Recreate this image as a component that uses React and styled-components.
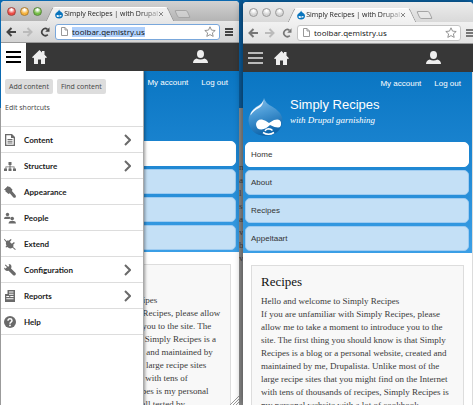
import React from "react";
import styled, { createGlobalStyle, css } from "styled-components";

const sans = '"Liberation Sans", Arial, sans-serif';
const serif = '"Liberation Serif", Georgia, serif';
const chromeFont = '"Open Sans", "Lucida Grande", sans-serif';
const adminFont = '"Open Sans", "Source Sans Pro", sans-serif';

const GlobalStyle = createGlobalStyle`
  * { box-sizing: border-box; }
  body { margin: 0; font-family: ${sans}; }
  button, input { font: inherit; color: inherit; margin: 0; padding: 0; border: 0; background: none; }
  a { color: inherit; text-decoration: none; }
  h1, h2, p, ul { margin: 0; padding: 0; }
  ul { list-style: none; }
  svg { display: block; }
`;

const Desktop = styled.main`
  display: flex;
  height: 100vh;
  overflow: hidden;
  padding-left: 1px;
  background: linear-gradient(#0b69b0 0 108px, #9b9b9b 108px);
`;

const Backdrop = styled.div`
  flex: none;
  width: 4px;
  overflow: hidden;
  padding-top: 161px;
  font: 9px/13px ${serif};
  color: #444;
  background: linear-gradient(#0b5c9b 0 108px, #8d8d8d 108px);
`;

const Window = styled.section`
  position: relative;
  display: flex;
  flex-direction: column;
  min-width: 0;
  flex: ${(p) => (p.$active ? "238 1 0" : "230 1 0")};
  margin-top: ${(p) => (p.$active ? 1 : 2)}px;
  border-radius: 4px 4px 0 0;
  overflow: hidden;
  background: #fff;
  ${(p) => !p.$active && css`z-index: 1; box-shadow: 0 0 8px rgba(0, 0, 0, 0.55);`}
`;

const TitleBar = styled.header`
  display: flex;
  flex: none;
  align-items: flex-end;
  height: 20px;
  padding-left: 6px;
  background: ${(p) => (p.$active ? "linear-gradient(#d2d2d2, #b4b4b4)" : "linear-gradient(#ececec, #d9d9d9)")};
`;

const Lights = styled.div`
  display: flex;
  gap: 4px;
  margin-bottom: 5px;
`;

const Light = styled.button`
  width: 9px;
  height: 9px;
  border-radius: 50%;
  border: 1px solid ${(p) => p.$edge};
  background: radial-gradient(circle at 50% 25%, #fff 0 10%, ${(p) => p.$color} 60%);
`;

const Tab = styled.div`
  position: relative;
  z-index: 0;
  display: flex;
  align-items: center;
  height: 14px;
  width: 122px;
  margin-left: 7px;
  padding: 0 7px 0 6px;
  font: 7px/14px ${chromeFont};
  color: #222;
  &::before, &::after {
    content: "";
    position: absolute;
    z-index: -1;
    inset: 0 30px 0 0;
    background: ${(p) => (p.$active ? "linear-gradient(#f1f1f1, #e8e8e8)" : "linear-gradient(#f8f8f8, #f1f1f1)")};
    border-top: 1px solid #fff;
    border-left: 1px solid #999;
    border-radius: 3px 0 0 0;
    transform: skewX(-25deg);
  }
  &::after {
    inset: 0 0 0 30px;
    border-left: 0;
    border-right: 1px solid #999;
    border-radius: 0 3px 0 0;
    transform: skewX(25deg);
  }
`;

const TabTitle = styled.span`
  flex: 1;
  margin-left: 1px;
  white-space: nowrap;
  mask-image: linear-gradient(90deg, #000 80%, rgba(0, 0, 0, 0.3));
`;

const CloseTab = styled.button`
  color: #888;
`;

const NewTab = styled.button`
  width: 13px;
  height: 8px;
  margin: 0 0 3px 5px;
  border: 1px solid #a5a5a5;
  border-radius: 2px;
  background: rgba(255, 255, 255, 0.25);
  transform: skewX(25deg);
`;

const ToolBar = styled.div`
  display: flex;
  flex: none;
  align-items: center;
  height: 22px;
  padding: 0 ${(p) => (p.$active ? 5 : 0)}px 0 5px;
  color: ${(p) => (p.$active ? "#444" : "#777")};
  border-bottom: 1px solid #999;
  background: ${(p) => (p.$active ? "linear-gradient(#e8e8e8, #d3d3d3)" : "linear-gradient(#f1f1f1, #e3e3e3)")};
`;

const ToolButton = styled.button`
  flex: none;
  width: ${(p) => p.$w || 17}px;
  overflow: hidden;
  ${(p) => p.$muted && css`color: #bbb;`}
`;

const AddressBar = styled.label`
  display: flex;
  flex: 1;
  align-items: center;
  min-width: 0;
  height: 16px;
  margin: 0 5px 0 -2px;
  padding: 0 3px 0 5px;
  border: 1px solid ${(p) => (p.$active ? "#79a7db" : "#c4c4c4")};
  border-radius: 3px;
  background: #fff;
`;

const AddressInput = styled.input`
  field-sizing: content;
  min-width: 0;
  height: 10px;
  margin: 0 auto 0 4px;
  font: 8px/10px ${chromeFont};
  color: #111;
  background: ${(p) => (p.$active ? "#b0d0fb" : "none")};
`;

const AdminBar = styled.nav`
  display: flex;
  flex: none;
  height: 28px;
  align-items: center;
  background: #373737;
  padding-right: ${(p) => (p.$active ? 31 : 32)}px;
`;

const MenuTab = styled.button`
  display: flex;
  width: 25px;
  height: 28px;
  align-items: center;
  justify-content: center;
  color: ${(p) => (p.$active ? "#000" : "#bbb")};
  background: ${(p) => (p.$active ? "#fff" : "none")};
`;

const IconButton = styled.button`
  color: #eee;
  margin-left: ${(p) => (p.$push ? "auto" : "6px")};
`;

const Page = styled.div`
  position: relative;
  flex: 1;
  min-height: 0;
  overflow: hidden;
  border-right: ${(p) => (p.$active ? 0 : 1)}px solid #dcdcdc;
`;

const SiteHeader = styled.header`
  padding: 7px 3px 2px 2px;
  color: #fff;
  background: linear-gradient(#0a76c3, #1b84d0 45%, #3b9fe6);
`;

const AccountLinks = styled.nav`
  display: flex;
  justify-content: flex-end;
  gap: 13px;
  padding-right: 8px;
  font-size: 8px;
  line-height: 10px;
`;

const Brand = styled.div`
  display: flex;
  gap: 7px;
  height: 41px;
  margin: 8px 0 4px 3px;
`;

const SiteName = styled.h1`
  font: 13px/16px ${sans};
  white-space: nowrap;
`;

const Slogan = styled.p`
  font: italic 9px/15px ${serif};
  white-space: nowrap;
`;

const SiteNav = styled.ul`
  display: flex;
  flex-direction: column;
  gap: 3px;
`;

const NavLink = styled.a`
  display: block;
  height: 25px;
  padding: 0 5px;
  border: 1px solid ${(p) => (p.$current ? "#fff" : "#9dcbf1")};
  border-radius: 5px;
  font-size: 8px;
  line-height: 23px;
  color: #333;
  background: ${(p) => (p.$current ? "#fff" : "#c4e0f6")};
`;

const Article = styled.article`
  margin: 12px 8px 0;
  padding: 8px 9px;
  height: 100%;
  border: 1px solid #ddd;
  background: #f8f8f8;
  color: #3b3b3b;
  font: 9px/13px ${serif};
  white-space: pre;
`;

const ArticleTitle = styled.h2`
  margin-bottom: 5px;
  font: 13px/16px ${serif};
  color: #111;
`;

const Tray = styled.aside`
  position: absolute;
  inset: 0 auto 0 0;
  width: 60%;
  background: #fff;
  border-right: 1px solid #aaa;
  box-shadow: 1px 0 3px rgba(0, 0, 0, 0.4);
  font-family: ${adminFont};
  color: #444;
`;

const Shortcuts = styled.div`
  display: flex;
  flex-wrap: wrap;
  gap: 4px;
  height: 55px;
  padding: 8px 4px 0;
  line-height: 15px;
  align-content: flex-start;
`;

const Shortcut = styled.button`
  height: 15px;
  padding: 0 4px;
  border-radius: 2px;
  background: #ddd;
  font-size: 7px;
  line-height: 15px;
`;

const EditLink = styled.a`
  flex-basis: 100%;
  margin-top: 2px;
  font-size: 7px;
`;

const TrayRow = styled.li`
  display: flex;
  align-items: center;
  height: 26px;
  padding: 0 12px 0 3px;
  border-top: 1px solid #ddd;
  color: #6a6a6a;
  &:last-child { height: 27px; border-bottom: 1px solid #ddd; }
`;

const TrayLink = styled.a`
  flex: 1;
  margin-left: 8px;
  font: 700 8px/12px Lato, ${adminFont};
  color: #222;
`;

const Grip = styled.div`
  position: absolute;
  right: 0;
  bottom: 0;
  color: #999;
`;

const Stroke = ({ d, w = 12, h = 12, sw = 2, vb = "0 0 12 12" }) => (
  <svg width={w} height={h} viewBox={vb} fill="none" stroke="currentColor" strokeWidth={sw} aria-hidden="true">
    <path d={d} />
  </svg>
);

const trayIcons = {
  Content: (
    <path fillRule="evenodd" d="M1 0h7l3 3v9H1zM2.300 1.300v9.400h7.400V4H7V1.300zM3.500 5h5v1h-5zM3.500 6.800h5v1h-5zM3.500 8.600h5v1h-5z" />
  ),
  Structure: (
    <path d="M4.500 2h3v3h-1v1.500H10.500V8.500H12v2.500H9V8.500h.7V7.300H6.500v1.200h1V11h-3V8.500h1V7.300H2.300v1.200H3V11H0V8.500h1.500V6.500h4V5h-1z" />
  ),
  Appearance: (
    <path d="M0 3.800 3.800 0l1.200 1.100.8-.4L8.500 3.800l-.6 1.300 3.500 4q1 1.300.1 2.300-1.100.9-2.300-.2L5.800 7.300 4.500 7.900 1.300 5.300l.5-.7z" />
  ),
  People: (
    <>
      <circle cx="3.500" cy="2.500" r="1.700" />
      <path d="M0 7q0-2.200 2-2.300h3Q6.300 4.800 6.500 6L5.500 7zM4.500 11.500q0-2.300 2-2.500h3.500q2 .2 2 2.500z" />
      <circle cx="8.200" cy="6.600" r="1.800" />
    </>
  ),
  Extend: (
    <path d="M.4.800 2.600 3 4 2.200l.6.600L6.800.900l.8.900L5.900 3.900 7.800 5.800 10 4.100l.8.900L9 7.100l.6.700-.5 1.100 2.700 2.300-.7.700L8.600 9.700Q5.500 11.500 3.500 9L2 9.500l-.5-.8 1-1Q1.500 5.500 2 4L0 1.500z" />
  ),
  Configuration: (
    <path d="M1.600.6 4 2.700l1-.5.2-1.300L4.500.1q3-.2 3 3L7 4.500l4.400 4.300q.9 1.200 0 2.200t-2.200.2L4.600 6.700 3 7Q.2 6.600 0 3.600l1.300.9 1.100-.4.4-1L.8 1.300z" />
  ),
  Reports: (
    <path fillRule="evenodd" d="M3.500 0H11v12H1V4h2.500zM5 1.500v1h4.500v-1zM5 3.700v1h4.500v-1zM2.300 6v1h2.900V6zM6.300 6v1h3.200V6zM2.300 8.200v1h7.200v-1z" />
  ),
  Help: (
    <>
      <circle cx="6" cy="6" r="6" />
      <path d="M4 4.700q.1-1.900 2-1.900t2 1.700q0 .9-1 1.600T6 7.700" fill="none" stroke="#fff" strokeWidth="1.500" />
      <circle cx="6" cy="9.400" r=".9" fill="#fff" />
    </>
  ),
};

const Drop = () => (
  <svg width="9" height="10" viewBox="0 0 9 10" aria-hidden="true">
    <path d="M4.500 0q.5 1.700 2.400 2.900Q9 4.200 8.800 6.300 8.300 9.800 4.500 10 .5 9.800.2 6.300 0 4.300 2 3 4.200 1.700 4.500 0z" fill="#0874bd" />
    <path d="M1.500 7q.8-1.600 2.100-.7l1.200.6 1.500-.8q1.200 0 1 1.200-.7.900-2.300.1Q2.500 9.400 1.500 7z" fill="#fff" />
  </svg>
);

const Logo = () => (
  <svg width="35" height="40" viewBox="0 0 35 40" aria-hidden="true">
    <defs>
      <linearGradient id="drop" x1="0" y1="0" x2=".3" y2="1">
        <stop offset="0" stopColor="#8fc3e9" />
        <stop offset=".45" stopColor="#4b9ad5" />
        <stop offset="1" stopColor="#0f66ac" />
      </linearGradient>
    </defs>
    <path d="M16 1q1 5 8 8.500Q34.500 15 34.500 24 33 38 17.500 39 2 38 .5 24 .5 15 8.500 9.500 15.500 6 16 1z" fill="url(#drop)" />
    <path d="M15.500 3q-1 4-7.500 7.500Q2 15 2.500 18.500q3.500-5.500 8.500-7.500 4-2 4.500-8z" fill="#f2f9ff" />
    <path d="M8 27q1-5 6-4.500 3.500.5 7 3.500l5-3q6-2 7 2.500.5 5-3 5-3 0-8-2.500-4 4-8.500 4.500Q8 32.500 8 27z" fill="#fff" />
    <path d="M17 34q1-2 3.500-2.300 2.500 0 4 1.800M15 35.500q5.500 3.500 11 0" fill="none" stroke="#fff" strokeWidth="1.500" />
  </svg>
);

const navItems = ["Home", "About", "Recipes", "Appeltaart"];
const trayItems = [
  ["Content", true],
  ["Structure", true],
  ["Appearance", false],
  ["People", false],
  ["Extend", false],
  ["Configuration", true],
  ["Reports", true],
  ["Help", false],
];

const wideCopy = `Hello and welcome to Simply Recipes
If you are unfamiliar with Simply Recipes, please allow
me to take a moment to introduce you to the site. The
first thing you should know is that Simply Recipes is a
blog or a personal website, created and maintained by
me, Drupalista. Unlike most of the large recipe sites
that you might find on the Internet with tens of
thousands of recipes, Simply Recipes is my personal
cookbook of hundreds of recipes, all tested by`;

const narrowCopy = `Hello and welcome to Simply Recipes
If you are unfamiliar with Simply Recipes, please
allow me to take a moment to introduce you to the
site. The first thing you should know is that Simply
Recipes is a blog or a personal website, created and
maintained by me, Drupalista. Unlike most of the
large recipe sites that you might find on the Internet
with tens of thousands of recipes, Simply Recipes is
my personal website with a lot of cookbook`;

function Browser({ active, copy, children }) {
  const lights = active
    ? [["Close", "#ee4b45", "#a3433d"], ["Minimize", "#f6b33c", "#ac7c32"], ["Zoom", "#75bd45", "#55863a"]]
    : [["Close", "#d4d4d4", "#999"], ["Minimize", "#d4d4d4", "#999"], ["Zoom", "#d4d4d4", "#999"]];
  return (
    <Window $active={active}>
      <TitleBar $active={active}>
        <Lights>
          {lights.map(([name, color, edge]) => (
            <Light key={name} aria-label={name} $color={color} $edge={edge} />
          ))}
        </Lights>
        <Tab $active={active}>
          <Drop />
          <TabTitle>Simply Recipes | with Drupal</TabTitle>
          <CloseTab aria-label="Close tab">
            <Stroke d="M1 1l4 4M5 1L1 5" w={6} h={6} vb="0 0 6 6" sw={1} />
          </CloseTab>
        </Tab>
        <NewTab aria-label="New tab" />
      </TitleBar>
      <ToolBar $active={active}>
        <ToolButton aria-label="Back">
          <Stroke d="M10 5H2M5.500 1L1.500 5l4 4" w={10} h={10} vb="0 0 10 10" />
        </ToolButton>
        <ToolButton aria-label="Forward" $muted>
          <Stroke d="M0 5h8M4.500 1l4 4-4 4" w={10} h={10} vb="0 0 10 10" />
        </ToolButton>
        <ToolButton aria-label="Reload">
          <svg width="10" height="10" viewBox="0 0 10 10">
            <path d="M7.800 7.600A3.500 3.500 0 1 1 7.500 2.300" fill="none" stroke="currentColor" strokeWidth="1.700" />
            <path d="M9.500.3v4.400H5.200z" fill="currentColor" />
          </svg>
        </ToolButton>
        <AddressBar $active={active}>
          <svg width="7" height="9" viewBox="0 0 7 9" fill="none" stroke="#999">
            <path d="M.5.5h3.500l2.500 2.500v5.500h-6zM4 .5V3h2.500" />
          </svg>
          <AddressInput $active={active} aria-label="Address" defaultValue="toolbar.qemistry.us" />
          <svg width="12" height="11" viewBox="0 0 12 11" fill="#fff" stroke="#888" strokeWidth=".9">
            <path d="M6 .8l1.500 3.300 3.700.4-2.800 2.400.8 3.500L6 8.600l-3.200 1.800.8-3.500L.8 4.500l3.700-.4z" />
          </svg>
        </AddressBar>
        <ToolButton aria-label="Browser menu" $w={active ? 9 : 7}>
          <Stroke d="M0 1h8M0 4h8M0 7h8" w={8} h={8} vb="0 0 8 8" sw={2} />
        </ToolButton>
      </ToolBar>
      <AdminBar $active={active}>
        <MenuTab $active={active} aria-label="Menu">
          <Stroke d="M0 1h15M0 6h15M0 11h15" w={15} h={12} vb="0 0 15 12" />
        </MenuTab>
        <IconButton aria-label="Home">
          <svg width="15" height="14" viewBox="0 0 15 14" fill="currentColor">
            <path d="M7.500 0L10 2.400V1h2.500v3.700L15 7.300 13.800 8.300 13 7.600V14H9V9.500H6V14H2V7.600l-.8.700L0 7.300z" />
          </svg>
        </IconButton>
        <IconButton $push aria-label="User">
          <svg width="15" height="14" viewBox="0 0 15 14" fill="currentColor">
            <ellipse cx="7.500" cy="4" rx="3.500" ry="4" />
            <path d="M0 13q0-3.500 3.500-4.500 4 2 8 0Q15 9.500 15 13z" />
          </svg>
        </IconButton>
      </AdminBar>
      <Page $active={active}>
        <SiteHeader>
          <AccountLinks>
            <a href="#account">My account</a>
            <a href="#logout">Log out</a>
          </AccountLinks>
          <Brand>
            {!active && (
              <>
                <Logo />
                <div>
                  <SiteName>Simply Recipes</SiteName>
                  <Slogan>with Drupal garnishing</Slogan>
                </div>
              </>
            )}
          </Brand>
          <SiteNav>
            {navItems.map((item, i) => (
              <li key={item}>
                <NavLink href={"#" + item} $current={i === 0} aria-label={item}>
                  {active ? null : item}
                </NavLink>
              </li>
            ))}
          </SiteNav>
        </SiteHeader>
        <Article>
          <ArticleTitle>{active ? "\u00a0" : "Recipes"}</ArticleTitle>
          <p>{copy}</p>
        </Article>
        {children}
      </Page>
    </Window>
  );
}

export default function App() {
  return (
    <Desktop>
      <GlobalStyle />
      <Browser active copy={wideCopy}>
        <Tray aria-label="Administration menu">
          <Shortcuts>
            <Shortcut>Add content</Shortcut>
            <Shortcut>Find content</Shortcut>
            <EditLink href="#shortcuts">Edit shortcuts</EditLink>
          </Shortcuts>
          <ul>
            {trayItems.map(([name, nested]) => (
              <TrayRow key={name}>
                <svg width="12" height="12" viewBox="0 0 12 12" fill="currentColor" aria-hidden="true">
                  {trayIcons[name]}
                </svg>
                <TrayLink href={"#" + name}>{name}</TrayLink>
                {nested && <Stroke d="M1 1l5 5-5 5" w={7} h={12} vb="0 0 7 12" sw={2} />}
              </TrayRow>
            ))}
          </ul>
        </Tray>
        <Grip>
          <Stroke d="M0 9L9 0M3 9L9 3M6 9L9 6" w={9} h={9} vb="0 0 9 9" sw={1} />
        </Grip>
      </Browser>
      <Backdrop aria-hidden="true">
        {["n", "a", "l", "s", "a", "v", "b", "v"].map((c, i) => (
          <div key={i}>{c}</div>
        ))}
      </Backdrop>
      <Browser copy={narrowCopy} />
    </Desktop>
  );
}
